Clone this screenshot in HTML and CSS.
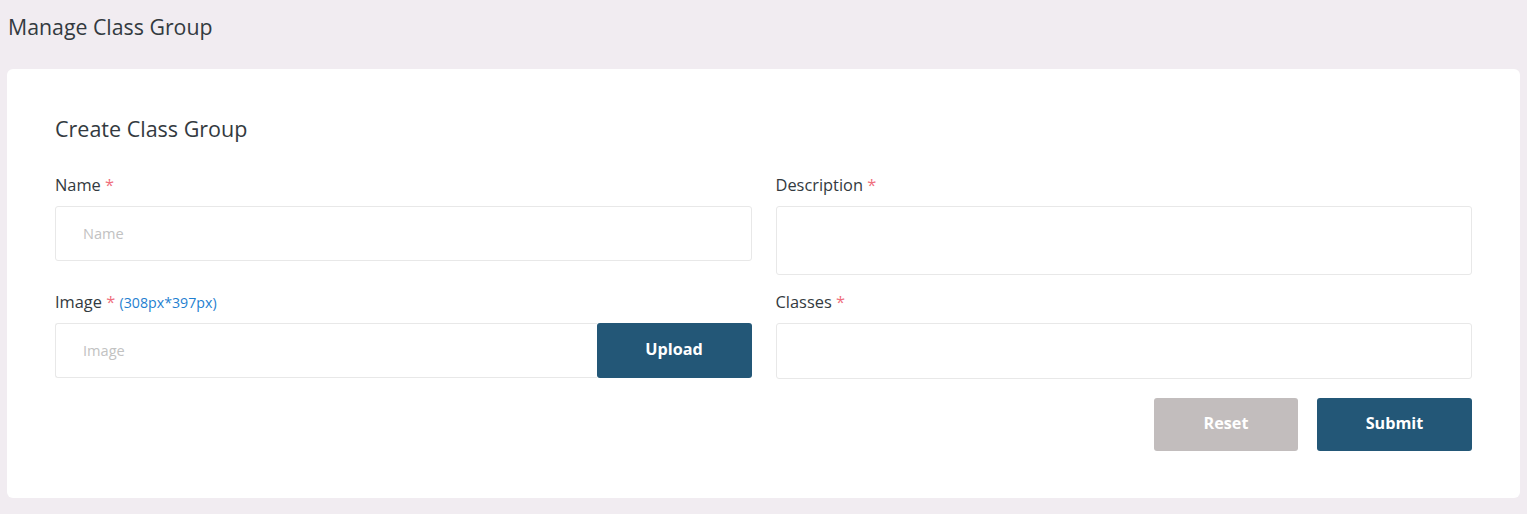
FILE: index.html
```html
<!DOCTYPE html>
<html>
<head>
<meta charset="utf-8">
<link rel="stylesheet" href="styles.css">
</head>
<body>
<div class="page">
  <h1 class="page-title">Manage Class Group</h1>
  <div class="card">
    <h2 class="card-title">Create Class Group</h2>
    <div class="form-grid">
      <div class="field">
        <label class="label">Name <span class="req">*</span></label>
        <input class="input" type="text" placeholder="Name">
      </div>
      <div class="field">
        <label class="label">Description <span class="req">*</span></label>
        <textarea class="input textarea"></textarea>
      </div>
      <div class="field">
        <label class="label">Image <span class="req">*</span> <span class="hint">(308px*397px)</span></label>
        <div class="upload-group">
          <input class="input upload-input" type="text" placeholder="Image">
          <button class="btn btn-primary upload-btn" type="button">Upload</button>
        </div>
      </div>
      <div class="field">
        <label class="label">Classes <span class="req">*</span></label>
        <div class="input select"></div>
      </div>
    </div>
    <div class="actions">
      <button class="btn btn-reset" type="button">Reset</button>
      <button class="btn btn-primary btn-submit" type="button">Submit</button>
    </div>
  </div>
</div>
</body>
</html>
```

FILE: styles.css
```css
* { box-sizing: border-box; }
html, body {
  margin: 0;
  padding: 0;
  background: #f1ecf1;
  font-family: "Open Sans", "Noto Sans", sans-serif;
  color: #333a40;
}
.page {
  padding: 0 7px 16px 7px;
}
.page-title {
  margin: 0;
  padding: 13px 0 0 1px;
  height: 69px;
  font-size: 21.3px;
  font-weight: 400;
  line-height: 28px;
  color: #333a40;
}
.card {
  background: #fff;
  border-radius: 6px;
  padding: 48px 48px 47px 48px;
}
.card-title {
  margin: 0 0 32px 0;
  font-size: 21.5px;
  font-weight: 400;
  line-height: 24px;
  color: #333a40;
}
.form-grid {
  display: grid;
  grid-template-columns: 1fr 1fr;
  column-gap: 24px;
  row-gap: 15px;
  align-items: start;
}
.field {
  display: flex;
  flex-direction: column;
}
.label {
  font-size: 16.4px;
  line-height: 24px;
  margin-bottom: 9px;
  color: #333a40;
}
.req { color: #ef6f7d; }
.hint {
  color: #1f7fd0;
  font-size: 14.2px;
  line-height: 1;
}
.input {
  display: block;
  width: 100%;
  height: 55px;
  border: 1px solid #e8e8e8;
  border-radius: 3px;
  background: #fff;
  padding: 0 27px 2px 27px;
  font-family: inherit;
  font-size: 14.6px;
  color: #333;
  outline: none;
}
.input::placeholder { color: #c2c2c2; }
.textarea {
  height: 69px;
  resize: none;
}
.select { height: 56px; }
.upload-group {
  display: flex;
}
.upload-input {
  flex: 1;
  border-top-right-radius: 0;
  border-bottom-right-radius: 0;
  border-right: none;
}
.upload-btn {
  width: 155px;
  height: 55px;
  border-top-left-radius: 0;
  border-bottom-left-radius: 0;
}
.btn {
  border: none;
  border-radius: 3px;
  font-family: inherit;
  font-weight: 700;
  font-size: 16.2px;
  color: #fff;
  cursor: pointer;
  padding: 0 0 3px 0;
}
.btn-primary { background: #235777; }
.actions {
  display: flex;
  justify-content: flex-end;
  gap: 19px;
  margin-top: 19px;
}
.btn-reset {
  background: #c2bdbd;
  width: 144px;
  height: 53px;
}
.btn-submit {
  width: 155px;
  height: 53px;
}
```
